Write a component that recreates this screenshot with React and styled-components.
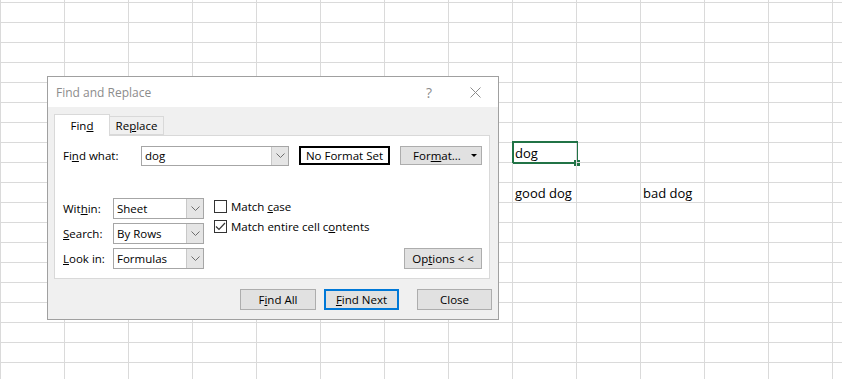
import styled, { createGlobalStyle } from "styled-components";

const GlobalStyle = createGlobalStyle`
  html, body {
    margin: 0;
    padding: 0;
    background: #fff;
  }
  body {
    font-family: "Open Sans", "Noto Sans", sans-serif;
  }
`;

const Page = styled.div`
  position: relative;
  width: 842px;
  height: 379px;
  overflow: hidden;
`;

const Sheet = styled.div`
  display: grid;
  grid-template-columns: repeat(14, 64px);
  grid-auto-rows: 20px;
  margin-top: -17px;
`;

const Cell = styled.div`
  position: relative;
  box-sizing: border-box;
  border-left: 1px solid #dadada;
  border-bottom: 1px solid #dadada;
  display: flex;
  align-items: flex-end;
  padding: 0 0 0 2px;
  font-family: "Open Sans", sans-serif;
  font-size: 13px;
  line-height: 18px;
  color: #000;
  white-space: nowrap;
`;

const Selection = styled.div`
  position: absolute;
  left: -1px;
  top: -2px;
  right: -2px;
  bottom: -2px;
  border: 2px solid #217346;
  pointer-events: none;

  &::after {
    content: "";
    position: absolute;
    right: -4px;
    bottom: -4px;
    width: 6px;
    height: 6px;
    background: #217346;
  }
`;

const Dialog = styled.div`
  position: absolute;
  left: 47px;
  top: 76px;
  width: 452px;
  height: 244px;
  box-sizing: border-box;
  border: 1px solid #a0a0a0;
  background: #f0f0f0;
  display: flex;
  flex-direction: column;
  font-family: "Open Sans", "Noto Sans", sans-serif;
  font-size: 11.5px;
  color: #000;
`;

const TitleBar = styled.div`
  height: 30px;
  background: #fff;
  display: flex;
  align-items: center;
  padding: 0 0 0 8px;
  flex-shrink: 0;
`;

const Title = styled.div`
  flex: 1;
  font-size: 12px;
  color: #8c8c8c;
`;

const TitleIcon = styled.div`
  width: 46px;
  height: 30px;
  display: flex;
  align-items: center;
  justify-content: center;
  color: #8c8c8c;
  font-size: 14px;
`;

const Body = styled.div`
  flex: 1;
  display: flex;
  flex-direction: column;
  padding: 7px 6px 10px 6px;
`;

const Tabs = styled.div`
  display: flex;
  align-items: flex-end;
  height: 21px;
`;

const Tab = styled.div`
  box-sizing: border-box;
  height: ${(p) => (p.$active ? "22px" : "19px")};
  width: ${(p) => p.$w}px;
  margin-bottom: ${(p) => (p.$active ? "-1px" : "0")};
  border: 1px solid #d9d9d9;
  border-bottom: ${(p) => (p.$active ? "none" : "1px solid #d9d9d9")};
  border-left: ${(p) => (p.$active ? "1px solid #d9d9d9" : "none")};
  background: ${(p) => (p.$active ? "#fff" : "#f0f0f0")};
  display: flex;
  align-items: center;
  justify-content: center;
  position: relative;
  z-index: ${(p) => (p.$active ? 1 : 0)};
`;

const Panel = styled.div`
  box-sizing: border-box;
  width: 436px;
  height: 144px;
  background: #fff;
  border: 1px solid #d9d9d9;
  padding: 9px 6px 7px 8px;
  display: flex;
  flex-direction: column;
`;

const TopRow = styled.div`
  display: flex;
  align-items: center;
  height: 21px;
`;

const Label = styled.div`
  width: ${(p) => p.$w}px;
  flex-shrink: 0;
`;

const Combo = styled.div`
  box-sizing: border-box;
  width: ${(p) => p.$w}px;
  height: ${(p) => p.$h || 21}px;
  border: 1px solid ${(p) => p.$border || "#a6a6a6"};
  background: #fff;
  display: flex;
  align-items: stretch;
`;

const ComboText = styled.div`
  flex: 1;
  padding-left: 3px;
  display: flex;
  align-items: center;
`;

const ComboArrow = styled.div`
  width: 16px;
  background: #e5e5e5;
  border-left: 1px solid #c8c8c8;
  display: flex;
  align-items: center;
  justify-content: center;
`;

const FormatBox = styled.div`
  box-sizing: border-box;
  width: 91px;
  height: 19px;
  margin-left: 10px;
  border: 2px solid #000;
  display: flex;
  align-items: center;
  justify-content: center;
`;

const Button = styled.div`
  box-sizing: border-box;
  width: ${(p) => p.$w}px;
  height: ${(p) => p.$h || 21}px;
  margin-left: ${(p) => p.$gap || 0}px;
  background: #e1e1e1;
  border: ${(p) => (p.$default ? "2px solid #0078d7" : "1px solid #adadad")};
  display: flex;
  align-items: center;
  justify-content: center;
  position: relative;
  flex-shrink: 0;
`;

const ButtonLabel = styled.span`
  margin-right: ${(p) => p.$shift || 0}px;
`;

const Caret = styled.span`
  position: absolute;
  right: 4px;
  top: 7px;
  width: 0;
  height: 0;
  border-left: 3px solid transparent;
  border-right: 3px solid transparent;
  border-top: 3px solid #000;
`;

const Lower = styled.div`
  margin-top: 32px;
  display: flex;
  align-items: flex-start;
`;

const SelectGrid = styled.div`
  display: grid;
  grid-template-columns: 50px 91px;
  row-gap: 4px;
  align-items: center;
`;

const Checks = styled.div`
  display: flex;
  flex-direction: column;
  gap: 6px;
  margin-left: 10px;
  padding-top: 1px;
`;

const CheckRow = styled.div`
  display: flex;
  align-items: center;
  gap: 4px;
  height: 14px;
`;

const Box = styled.div`
  box-sizing: border-box;
  width: 13px;
  height: 13px;
  border: 1px solid #333;
  background: #fff;
  display: flex;
  align-items: center;
  justify-content: center;
`;

const OptionsWrap = styled.div`
  flex: 1;
  align-self: flex-end;
  display: flex;
  justify-content: flex-end;
  padding-right: 1px;
`;

const Footer = styled.div`
  display: flex;
  justify-content: flex-end;
  margin-top: 10px;
  padding-right: 0;
`;

function Chevron() {
  return (
    <svg width="9" height="5" viewBox="0 0 9 5">
      <path d="M0.5 0.5 L4.5 4.5 L8.5 0.5" fill="none" stroke="#6d6d6d" strokeWidth="1" />
    </svg>
  );
}

function Check() {
  return (
    <svg width="11" height="9" viewBox="0 0 11 9">
      <path d="M1 4.5 L4 7.5 L10 1" fill="none" stroke="#333" strokeWidth="1.2" />
    </svg>
  );
}

function Select({ value }) {
  return (
    <Combo $w={91}>
      <ComboText>{value}</ComboText>
      <ComboArrow>
        <Chevron />
      </ComboArrow>
    </Combo>
  );
}

const cells = {
  "8-8": "dog",
  "10-8": "good dog",
  "10-10": "bad dog",
};

export default function App() {
  const rows = Array.from({ length: 21 });
  const cols = Array.from({ length: 14 });
  return (
    <Page>
      <GlobalStyle />
      <Sheet>
        {rows.map((_, r) =>
          cols.map((_, c) => (
            <Cell key={`${r}-${c}`}>
              {cells[`${r}-${c}`]}
              {r === 8 && c === 8 && <Selection />}
            </Cell>
          ))
        )}
      </Sheet>

      <Dialog>
        <TitleBar>
          <Title>Find and Replace</Title>
          <TitleIcon>?</TitleIcon>
          <TitleIcon>
            <svg width="11" height="11" viewBox="0 0 11 11">
              <path d="M0.5 0.5 L10.5 10.5 M10.5 0.5 L0.5 10.5" stroke="#8c8c8c" strokeWidth="1" />
            </svg>
          </TitleIcon>
        </TitleBar>
        <Body>
          <Tabs>
            <Tab $active $w={56}>
              Fin<u>d</u>
            </Tab>
            <Tab $w={54}>
              Re<u>p</u>lace
            </Tab>
          </Tabs>
          <Panel>
            <TopRow>
              <Label $w={78}>
                Fi<u>n</u>d what:
              </Label>
              <Combo $w={148} $h={20}>
                <ComboText>dog</ComboText>
                <ComboArrow>
                  <Chevron />
                </ComboArrow>
              </Combo>
              <FormatBox>No Format Set</FormatBox>
              <Button $w={82} $h={19} $gap={10}>
                <ButtonLabel $shift={8}>
                  For<u>m</u>at...
                </ButtonLabel>
                <Caret />
              </Button>
            </TopRow>
            <Lower>
              <SelectGrid>
                <Label>
                  Wit<u>h</u>in:
                </Label>
                <Select value="Sheet" />
                <Label>
                  <u>S</u>earch:
                </Label>
                <Select value="By Rows" />
                <Label>
                  <u>L</u>ook in:
                </Label>
                <Select value="Formulas" />
              </SelectGrid>
              <Checks>
                <CheckRow>
                  <Box />
                  <span>
                    Match <u>c</u>ase
                  </span>
                </CheckRow>
                <CheckRow>
                  <Box>
                    <Check />
                  </Box>
                  <span>
                    Match entire cell c<u>o</u>ntents
                  </span>
                </CheckRow>
              </Checks>
              <OptionsWrap>
                <Button $w={78}>
                  Op<u>t</u>ions &lt; &lt;
                </Button>
              </OptionsWrap>
            </Lower>
          </Panel>
          <Footer>
            <Button $w={76}>
              F<u>i</u>nd All
            </Button>
            <Button $w={75} $gap={8} $default>
              <u>F</u>ind Next
            </Button>
            <Button $w={75} $gap={18}>
              Close
            </Button>
          </Footer>
        </Body>
      </Dialog>
    </Page>
  );
}
